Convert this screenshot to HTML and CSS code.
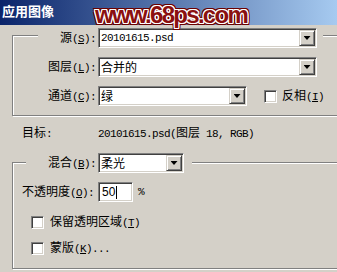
FILE: index.html
```html
<!DOCTYPE html>
<html lang="zh-CN">
<head>
    <meta charset="UTF-8">
    <meta name="viewport" content="width=device-width, initial-scale=1.0">
    <title>应用图像</title>
    <link rel="stylesheet" href="styles.css">
</head>
<body>
    <div class="window">
        <div class="titlebar">应用图像</div>
        <!-- site watermark stamped over the title bar -->
        <div class="watermark">www.68ps.com</div>

        <div class="group group-source">
            <div class="row head head-source">
                <span class="lbl">源<span class="en">(<u>S</u>):</span></span>
                <div class="combo combo-wide"><span class="val en">20101615.psd</span><span class="drop"></span></div>
            </div>
            <div class="row">
                <span class="lbl">图层<span class="en">(<u>L</u>):</span></span>
                <div class="combo combo-wide"><span class="val">合并的</span><span class="drop"></span></div>
            </div>
            <div class="row">
                <span class="lbl">通道<span class="en">(<u>C</u>):</span></span>
                <div class="combo combo-mid"><span class="val">绿</span><span class="drop"></span></div>
                <span class="check check-invert"></span>
                <span class="check-text">反相<span class="en">(<u>I</u>)</span></span>
            </div>
        </div>

        <div class="target">
            <span class="key">目标<span class="en">:</span></span>
            <span><span class="en">20101615.psd(</span>图层<span class="en"> 18, RGB)</span></span>
        </div>

        <div class="group group-blend">
            <div class="row head head-blend">
                <span class="lbl">混合<span class="en">(<u>B</u>):</span></span>
                <div class="combo combo-short"><span class="val">柔光</span><span class="drop"></span></div>
            </div>
            <div class="row opacity">
                <span class="lbl">不透明度<span class="en">(<u>O</u>):</span></span>
                <div class="field"><span class="num">50</span><span class="caret"></span></div>
                <span class="en pct">%</span>
            </div>
            <div class="row opt">
                <span class="check"></span>
                <span>保留透明区域<span class="en">(<u>T</u>)</span></span>
            </div>
            <div class="row opt opt-last">
                <span class="check"></span>
                <span>蒙版<span class="en">(<u>K</u>)...</span></span>
            </div>
        </div>
    </div>
</body>
</html>
```

FILE: styles.css
```css
body {
    margin: 0;
    width: 337px;
    height: 272px;
    overflow: hidden;
    background: #d4d0c8;
    font-family: "Noto Sans CJK SC", sans-serif;
    font-size: 12px;
    line-height: 14px;
    color: #000;
}

/* latin runs: narrow mono like the dialog's system font */
.en {
    font-family: "Liberation Mono", monospace;
    font-size: 11px;
    letter-spacing: -0.6px;
}

.window {
    position: relative;
}

.titlebar {
    height: 25px;
    padding-left: 2px;
    background: linear-gradient(to right, #0a246a, #a6caf0);
    color: #fff;
    font-weight: bold;
    font-size: 13px;
    line-height: 21px;
}

.watermark {
    position: absolute;
    left: 95px;
    top: 3px;
    font: bold 24px/24px "Liberation Sans", sans-serif;
    letter-spacing: -1.7px;
    color: #8b1010;
    text-shadow:
        1px 0 #fff, -1px 0 #fff, 0 1px #fff, 0 -1px #fff,
        1px 1px #fff, -1px -1px #fff, 1px -1px #fff, -1px 1px #fff,
        2px 0 #6a0000, -2px 0 #6a0000, 0 2px #6a0000, 0 -2px #6a0000,
        2px 2px #6a0000, -2px -2px #6a0000, 2px -2px #6a0000, -2px 2px #6a0000;
}

/* etched group box, its right side is cut off by the window edge */
.group {
    border: 1px solid #808080;
    border-right: none;
    box-shadow: inset 1px 1px #fff, 1px 1px #fff;
}

.group-source {
    margin: 10px 0 0 12px;
    padding-bottom: 9px;
}

.group-blend {
    margin: 21px 0 0 12px;
    padding-bottom: 12px;
}

.row {
    display: flex;
    align-items: center;
    gap: 2px;
}

.group-source .row {
    margin: 9px 0 0 25px;
}

.group-source .lbl {
    width: 58px;
    text-align: right;
}

.head {
    width: fit-content;
    background: #d4d0c8;
}

.group-source .head-source {
    margin-top: -8px;
    padding-right: 6px;
}

.head-blend {
    margin: -10px 0 0 13px;
    padding-right: 8px;
}

.head-blend .lbl {
    width: 70px;
    text-align: right;
}

.combo {
    display: flex;
    box-sizing: border-box;
    height: 20px;
    padding: 1px;
    border: 1px solid;
    border-color: #808080 #fff #fff #808080;
    box-shadow: inset 1px 1px #404040, inset -1px -1px #d4d0c8;
    background: #fff;
}

.combo-wide {
    width: 219px;
}

.combo-mid {
    width: 149px;
}

.combo-short {
    width: 86px;
}

.combo .val {
    flex: 1;
    padding-left: 1px;
    line-height: 16px;
    white-space: nowrap;
}

.drop {
    display: flex;
    align-items: center;
    justify-content: center;
    box-sizing: border-box;
    width: 16px;
    height: 16px;
    border: 1px solid;
    border-color: #d4d0c8 #404040 #404040 #d4d0c8;
    box-shadow: inset 1px 1px #fff, inset -1px -1px #808080;
    background: #d4d0c8;
}

.drop::after {
    content: "";
    width: 7px;
    height: 4px;
    background: #000;
    clip-path: polygon(0 0, 100% 0, 50% 100%);
}

.check {
    flex: none;
    box-sizing: border-box;
    width: 13px;
    height: 13px;
    border: 1px solid;
    border-color: #808080 #fff #fff #808080;
    box-shadow: inset 1px 1px #404040, inset -1px -1px #d4d0c8;
    background: #fff;
}

.check-invert {
    margin-left: 15px;
}

.check-text {
    margin-left: 3px;
}

.target {
    display: flex;
    margin: 9px 0 0 22px;
}

.target .key {
    width: 76px;
}

.opacity {
    margin: 9px 0 0 9px;
}

.opacity .lbl {
    width: 74px;
}

.field {
    display: flex;
    align-items: center;
    box-sizing: border-box;
    width: 35px;
    height: 20px;
    padding: 1px 1px 1px 3px;
    border: 1px solid;
    border-color: #808080 #fff #fff #808080;
    box-shadow: inset 1px 1px #404040, inset -1px -1px #d4d0c8;
    background: #fff;
}

.num {
    font-family: "Liberation Sans", sans-serif;
    font-size: 12px;
}

.caret {
    width: 1px;
    height: 13px;
    margin-left: 1px;
    background: #000;
}

.pct {
    margin-left: 3px;
}

.opt {
    margin: 12px 0 0 18px;
    gap: 6px;
    line-height: 13px;
}

.opt-last {
    margin-top: 10px;
}
```
